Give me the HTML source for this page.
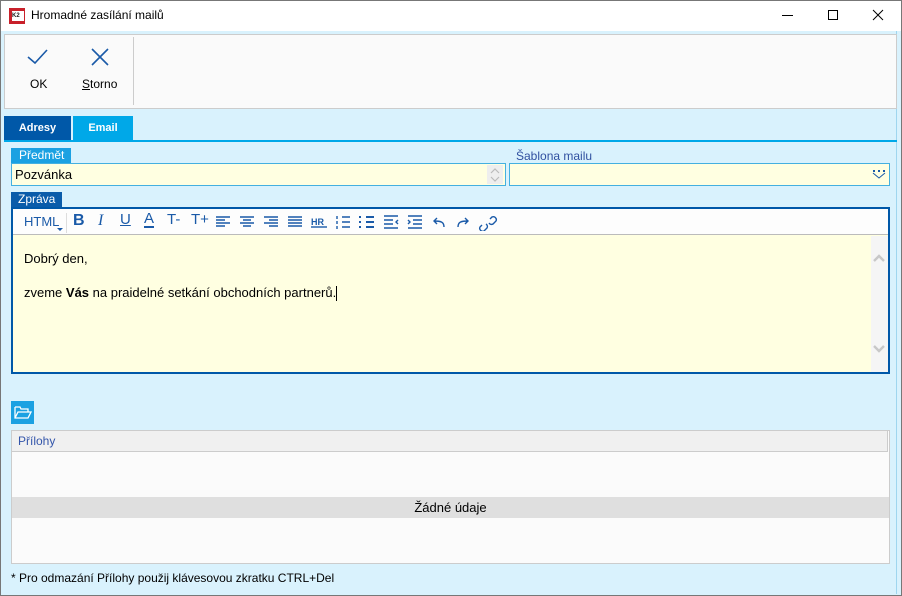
<!DOCTYPE html>
<html><head><meta charset="utf-8"><style>
*{box-sizing:border-box;margin:0;padding:0}
body{width:902px;height:596px;overflow:hidden;font-family:"Liberation Sans","DejaVu Sans",sans-serif;font-size:12px;background:#d9f2fd;position:relative}
.a{position:absolute}
</style></head><body>
<div class="a" style="left:0;top:0;width:902px;height:596px;border:1px solid #777"></div>
<div class="a" style="left:1px;top:1px;width:900px;height:30px;background:#fff"></div>
<div class="a" style="left:9px;top:8px;width:16px;height:16px;background:#c8202a"></div>
<div class="a" style="left:12px;top:11px;width:12px;height:10px;background:#fff;font-size:6px;font-weight:bold;line-height:10px;color:#222">K2</div>
<div class="a" style="left:31px;top:8px;font-size:12px;color:#000">Hromadné zasílání mailů</div>
<div class="a" style="left:782px;top:15px;width:11px;height:1px;background:#000"></div>
<div class="a" style="left:828px;top:10px;width:10px;height:10px;border:1px solid #000"></div>
<svg class="a" style="left:872px;top:9px" width="12" height="12"><path d="M1 1L11 11M11 1L1 11" stroke="#000" stroke-width="1"/></svg>
<div class="a" style="left:896px;top:31px;width:1px;height:563px;background:#9fd6ef"></div>
<div class="a" style="left:4px;top:34px;width:893px;height:75px;background:#fafafa;border:1px solid #ccc"></div>
<div class="a" style="left:133px;top:37px;width:1px;height:68px;background:#ccc"></div>
<svg class="a" style="left:27px;top:48px" width="22" height="18"><path d="M1 9L8 15L20 2" fill="none" stroke="#1a5aa8" stroke-width="1.6"/></svg>
<svg class="a" style="left:90px;top:47px" width="20" height="20"><path d="M2 2L18 18M18 2L2 18" fill="none" stroke="#1a5aa8" stroke-width="1.6"/></svg>
<div class="a" style="left:30px;top:77px">OK</div>
<div class="a" style="left:82px;top:77px"><u>S</u>torno</div>
<div class="a" style="left:4px;top:116px;width:67px;height:25px;background:#0058a8;color:#fff;font-weight:bold;font-size:11px;text-align:center;line-height:25px">Adresy</div>
<div class="a" style="left:73px;top:116px;width:60px;height:25px;background:#00a8e8;color:#fff;font-weight:bold;font-size:11px;text-align:center;line-height:25px">Email</div>
<div class="a" style="left:4px;top:140px;width:893px;height:2px;background:#00a8e8"></div>
<div class="a" style="left:11px;top:148px;width:60px;height:15px;background:#1ba1e2;color:#fff;font-size:12px;line-height:15px;padding-left:8px">Předmět</div>
<div class="a" style="left:11px;top:163px;width:495px;height:23px;background:#ffffe1;border:1px solid #44b0e0;padding-left:3px;line-height:21px;font-size:13px">Pozvánka</div>
<div class="a" style="left:487px;top:165px;width:16px;height:19px;background:#eee"></div>
<svg class="a" style="left:489px;top:166px" width="12" height="18" fill="none" stroke="#bbb" stroke-width="1.2"><path d="M2 7l4-4 4 4M2 11l4 4 4-4"/></svg>
<div class="a" style="left:516px;top:149px;color:#3050a0">Šablona mailu</div>
<div class="a" style="left:509px;top:163px;width:381px;height:23px;background:#ffffe1;border:1px solid #44b0e0"></div>
<svg class="a" style="left:872px;top:169px" width="14" height="10"><path d="M1 1h2v2h-2zM6 1h2v2h-2zM11 1h2v2h-2z" fill="#1a5aa8"/><path d="M1 4L7 9L13 4" fill="none" stroke="#1a5aa8"/></svg>
<div class="a" style="left:11px;top:192px;width:51px;height:15px;background:#0a5caa;color:#fff;line-height:15px;padding-left:7px">Zpráva</div>
<div class="a" style="left:11px;top:207px;width:879px;height:167px;border:2px solid #0058a8;background:#ffffe1"></div>
<div class="a" style="left:13px;top:209px;width:875px;height:26px;background:#fdfdfd;border-bottom:1px solid #bbb"></div>
<div class="a" style="left:871px;top:236px;width:17px;height:136px;background:#f5f5f5"></div>
<svg class="a" style="left:871px;top:236px" width="17" height="136" fill="none" stroke="#c8c8c8" stroke-width="2.4"><path d="M3 25l5-5 5 5M3 110l5 5 5-5"/></svg>
<div class="a" style="left:24px;top:214px;color:#1a5aa8;font-size:13px">HTML</div>
<div class="a" style="left:57px;top:228px;border:3px solid transparent;border-top:3px solid #1a5aa8"></div>
<div class="a" style="left:66px;top:213px;width:1px;height:20px;background:#ddd"></div>
<div class="a" style="left:73px;top:212px;color:#1a5aa8;font-size:16px;font-weight:bold">B</div>
<div class="a" style="left:98px;top:212px;color:#1a5aa8;font-size:16px;font-style:italic;font-family:'Liberation Serif'">I</div>
<div class="a" style="left:120px;top:211px;color:#1a5aa8;font-size:15px;text-decoration:underline">U</div>
<div class="a" style="left:144px;top:211px;color:#1a5aa8;font-size:15px;border-bottom:2px solid #1a5aa8;line-height:15px">A</div>
<div class="a" style="left:167px;top:211px;color:#1a5aa8;font-size:15px">T-</div>
<div class="a" style="left:191px;top:211px;color:#1a5aa8;font-size:15px">T+</div>
<svg class="a" style="left:214px;top:213px" width="290" height="18" fill="none" stroke="#1a5aa8" stroke-width="1.4">
<path d="M2 4h14M2 7h9M2 10h14M2 13h9"/>
<path d="M26 4h14M29 7h8M26 10h14M29 13h8"/>
<path d="M50 4h14M55 7h9M50 10h14M55 13h9"/>
<path d="M74 4h14M74 7h14M74 10h14M74 13h14"/>
<text x="97" y="12" font-size="9" font-weight="bold" fill="#1a5aa8" stroke="none" font-family="Liberation Sans">HR</text><path d="M97 14h16"/>
<path d="M128 4h8M128 9h8M128 14h8M123 3v3M123 8v3M123 13v3"/>
<path d="M152 4h8M152 9h8M152 14h8M146 3v2M146 8v2M146 13v2" stroke-width="2"/>
<path d="M170 3h14M170 7h9M170 11h9M170 15h14M184 7l-2 2 2 2"/>
<path d="M194 3h14M199 7h9M199 11h9M194 15h14M194 7l2 2-2 2"/>
<path d="M230 14c0-5-3-6-10-6M223 5l-3 3 3 3"/>
<path d="M244 14c0-5 3-6 10-6M251 5l3 3-3 3"/>
<path d="M268 12l-2 2a3 3 0 0 0 4 4l3-3a3 3 0 0 0-1-4M276 6l2-2a3 3 0 0 1 4 4l-3 3a3 3 0 0 1 -4-1"/>
</svg>
<div class="a" style="left:24px;top:251px;font-size:13px">Dobrý den,</div>
<div class="a" style="left:24px;top:285px;font-size:13px">zveme <b>Vás</b> na praidelné setkání obchodních partnerů.<span style="display:inline-block;width:1px;height:15px;background:#000;vertical-align:middle"></span></div>
<div class="a" style="left:11px;top:401px;width:23px;height:23px;background:#1ba1e2"></div>
<svg class="a" style="left:14px;top:405px" width="18" height="15" fill="none" stroke="#fff" stroke-width="1.3"><path d="M1 2h5l1 2h7v3M1 2v11h13l3-6H4L1 13"/></svg>
<div class="a" style="left:11px;top:430px;width:879px;height:134px;background:#fbfbfb;border:1px solid #ccc"></div>
<div class="a" style="left:12px;top:431px;width:876px;height:21px;background:#f0f0f0;border-bottom:1px solid #ccc;border-right:1px solid #ccc;color:#3355aa;padding-left:6px;line-height:21px">Přílohy</div>
<div class="a" style="left:12px;top:497px;width:877px;height:21px;background:#dfdfdf;text-align:center;line-height:21px;font-size:13px">Žádné údaje</div>
<div class="a" style="left:11px;top:571px">* Pro odmazání Přílohy použij klávesovou zkratku CTRL+Del</div>
</body></html>
